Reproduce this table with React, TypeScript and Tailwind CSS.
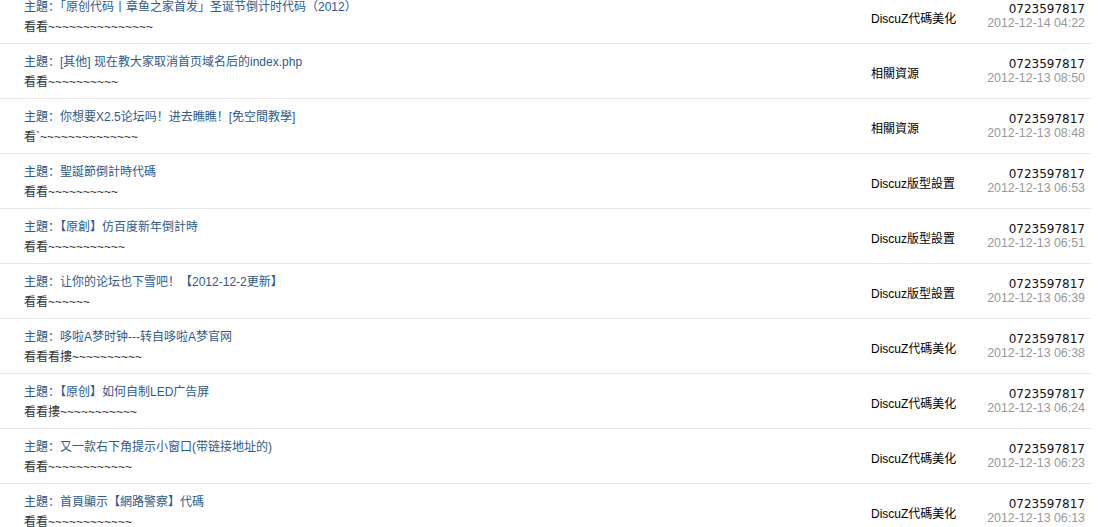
import React from "react";

const rows = [
  { t: "「原创代码丨章鱼之家首发」圣诞节倒计时代码（2012）", s: "看看~~~~~~~~~~~~~~~", c: "DiscuZ代碼美化", d: "2012-12-14 04:22" },
  { t: "[其他] 现在教大家取消首页域名后的index.php", s: "看看~~~~~~~~~~", c: "相關資源", d: "2012-12-13 08:50" },
  { t: "你想要X2.5论坛吗！进去瞧瞧！[免空間教學]", s: "看`~~~~~~~~~~~~~~", c: "相關資源", d: "2012-12-13 08:48" },
  { t: "聖誕節倒計時代碼", s: "看看~~~~~~~~~~", c: "Discuz版型設置", d: "2012-12-13 06:53" },
  { t: "【原創】仿百度新年倒計時", s: "看看~~~~~~~~~~~", c: "Discuz版型設置", d: "2012-12-13 06:51" },
  { t: "让你的论坛也下雪吧！【2012-12-2更新】", s: "看看~~~~~~", c: "Discuz版型設置", d: "2012-12-13 06:39" },
  { t: "哆啦A梦时钟---转自哆啦A梦官网", s: "看看看摟~~~~~~~~~~", c: "DiscuZ代碼美化", d: "2012-12-13 06:38" },
  { t: "【原创】如何自制LED广告屏", s: "看看摟~~~~~~~~~~~", c: "DiscuZ代碼美化", d: "2012-12-13 06:24" },
  { t: "又一款右下角提示小窗口(带链接地址的)", s: "看看~~~~~~~~~~~~", c: "DiscuZ代碼美化", d: "2012-12-13 06:23" },
  { t: "首頁顯示【網路警察】代碼", s: "看看~~~~~~~~~~~~", c: "DiscuZ代碼美化", d: "2012-12-13 06:13" },
];

const font = { fontFamily: '"Liberation Sans", Arial, "Noto Sans CJK SC", sans-serif' };

export default function App() {
  return (
    <div className="w-[1118px] h-[527px] overflow-hidden bg-white text-[12px]" style={font}>
      <div className="w-[1091px] -mt-[12px]">
        {rows.map((r, i) => (
          <div key={i} className="flex h-[55px] border-t border-[#e8e8e8]">
            <div className="flex-1 pl-[24px] pt-[8px] leading-[20px]">
              <div className="text-[#2f5a8c] whitespace-nowrap">主題：{r.t}</div>
              <div className="text-[#333]">{r.s}</div>
            </div>
            <div className="w-[114px] pt-[23px] leading-[14px] text-black whitespace-nowrap">{r.c}</div>
            <div className="w-[100px] pt-[13px] leading-[14px] text-right whitespace-nowrap">
              <div className="text-[#111] font-['DejaVu_Sans',sans-serif] text-[12px]">0723597817</div>
              <div className="text-[#999] text-[12.4px]">{r.d}</div>
            </div>
            <div className="w-[6px]" />
          </div>
        ))}
      </div>
    </div>
  );
}
